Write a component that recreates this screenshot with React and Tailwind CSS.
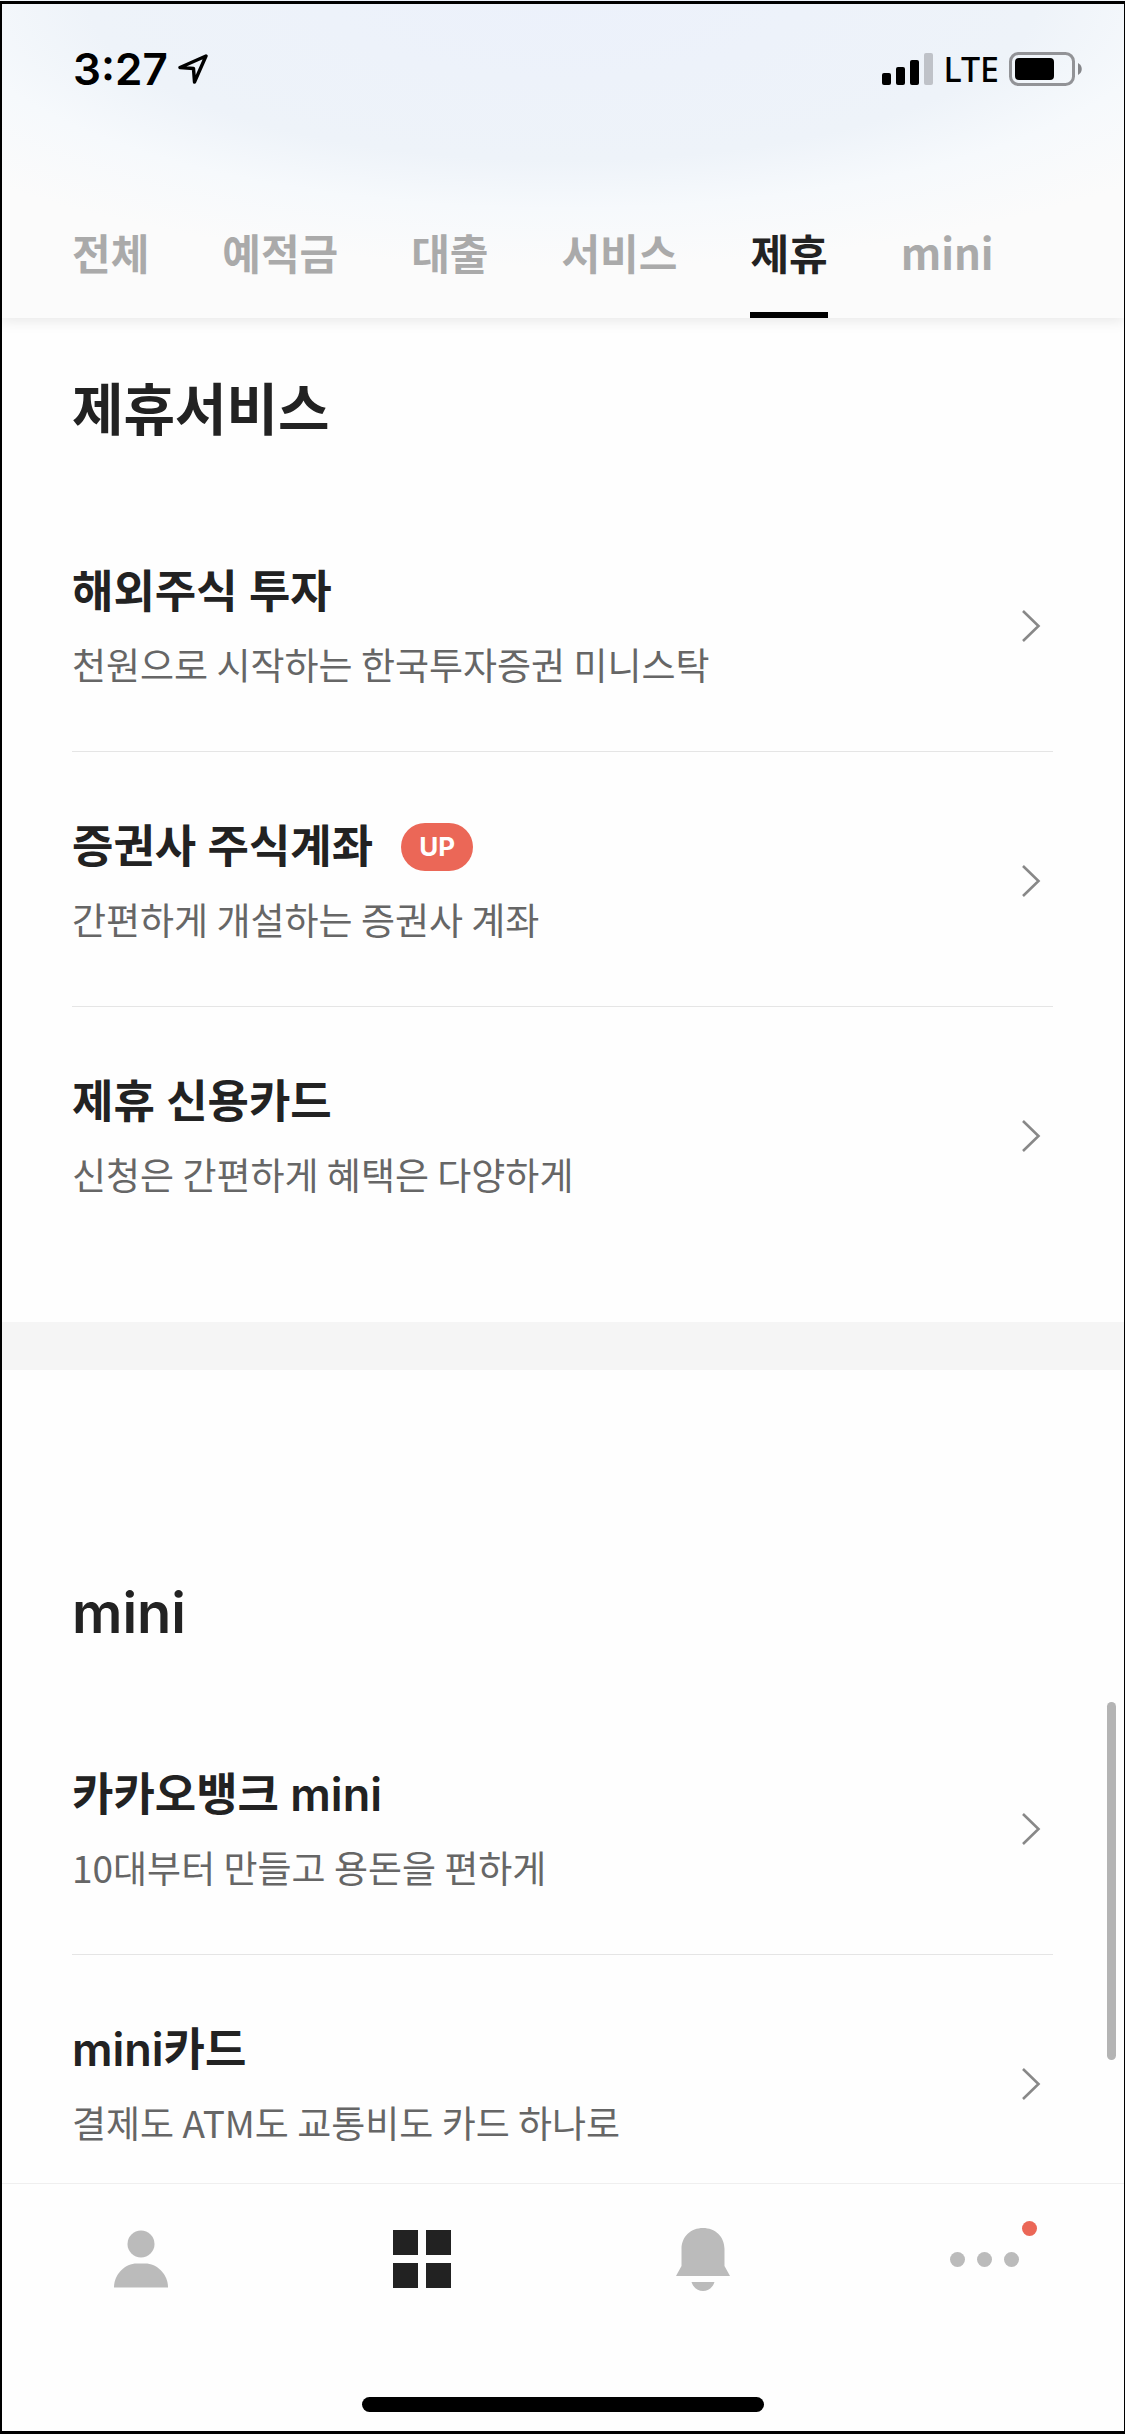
import React, { useState } from 'react';

const tabs = ['전체', '예적금', '대출', '서비스', '제휴', 'mini'];

const partnerServices = [
  { title: '해외주식 투자', desc: '천원으로 시작하는 한국투자증권 미니스탁' },
  { title: '증권사 주식계좌', desc: '간편하게 개설하는 증권사 계좌', badge: 'UP' },
  { title: '제휴 신용카드', desc: '신청은 간편하게 혜택은 다양하게' },
];

const miniServices = [
  { title: '카카오뱅크 mini', desc: '10대부터 만들고 용돈을 편하게' },
  { title: 'mini카드', desc: '결제도 ATM도 교통비도 카드 하나로' },
];

const StatusBar = () => (
  <div className="flex h-[138px] items-center justify-between pl-[73px] pr-[43px] text-black">
    <div className="flex items-center gap-[10px]">
      <span className="font-['Inter',sans-serif] text-[44px] leading-none font-semibold">3:27</span>
      <svg className="h-[30px] w-[30px]" viewBox="0 0 30 30" fill="none" stroke="currentColor" strokeWidth="3.4" strokeLinejoin="round">
        <path d="M28 2 L2 13.5 L15.5 14.5 L16.5 28 Z" />
      </svg>
    </div>
    <div className="flex items-center gap-[10px]">
      <svg className="h-[32px] w-[51px]" viewBox="0 0 51 32" fill="currentColor">
        <rect x="0" y="20" width="9" height="12" rx="2" />
        <rect x="14" y="14" width="9" height="18" rx="2" />
        <rect x="28" y="7" width="9" height="25" rx="2" />
        <rect x="42" y="0" width="9" height="32" rx="2" fill="#bfc2c8" />
      </svg>
      <span className="font-['Noto_Sans',sans-serif] text-[34px] leading-none font-medium">LTE</span>
      <svg className="h-[34px] w-[73px]" viewBox="0 0 73 34" fill="none">
        <rect x="1.5" y="1.5" width="63" height="31" rx="8" stroke="#929397" strokeWidth="3" />
        <rect x="6" y="6" width="39" height="22" rx="4" fill="#000" />
        <path d="M69 11 C74 13.5 74 20.5 69 23 Z" fill="#85868a" />
      </svg>
    </div>
  </div>
);

const ServiceRow = ({ title, desc, badge }) => (
  <li className="border-b border-[#e5e5e5] last:border-b-0">
    <a href="#" className="flex h-[254px] items-center justify-between pt-1 pr-3">
      <div className="pb-0.5">
        <div className="flex items-center gap-7">
          <h3 className="font-['Inter','Noto_Sans_CJK_KR',sans-serif] text-[45px] leading-[60px] font-semibold text-[#222]">
            {title}
          </h3>
          {badge && (
            <span className="flex h-12 items-center rounded-full bg-[#eb6757] px-[18px] font-['Inter',sans-serif] text-[26px] leading-none font-bold text-white">
              {badge}
            </span>
          )}
        </div>
        <p className="mt-[18px] text-[37px] leading-[48px] text-[#666]">{desc}</p>
      </div>
      <svg className="h-[34px] w-5" viewBox="0 0 20 34" fill="none" stroke="#888" strokeWidth="2.6">
        <path d="M2 2 L17.5 17 L2 32" />
      </svg>
    </a>
  </li>
);

const ServiceList = ({ heading, items }) => (
  <>
    <h2 className="mb-[51px] font-['Inter','Noto_Sans_CJK_KR',sans-serif] text-[56px] leading-[72px] font-semibold text-[#222]">
      {heading}
    </h2>
    <ul>
      {items.map((item) => (
        <ServiceRow key={item.title} {...item} />
      ))}
    </ul>
  </>
);

const BottomNav = () => (
  <nav className="relative h-[253px] shrink-0 border-t border-[#efefef] bg-[#fefefe]">
    <div className="grid grid-cols-4 pt-[37px]">
      <button type="button" aria-label="내 정보" className="flex h-[76px] items-center justify-center">
        <svg className="h-[64px] w-[54px]" viewBox="0 0 54 64" fill="#bbb">
          <circle cx="27" cy="17" r="13.5" />
          <path d="M0 60.5 C0 47 11 36.5 23 36.5 H31 C43 36.5 54 47 54 60.5 Z" />
        </svg>
      </button>
      <button type="button" aria-label="서비스" className="flex h-[76px] items-center justify-center">
        <svg className="h-[58px] w-[58px]" viewBox="0 0 58 58" fill="#222">
          <rect x="0" y="0" width="25" height="25" />
          <rect x="33" y="0" width="25" height="25" />
          <rect x="0" y="33" width="25" height="25" />
          <rect x="33" y="33" width="25" height="25" />
        </svg>
      </button>
      <button type="button" aria-label="알림" className="flex h-[76px] items-center justify-center">
        <svg className="h-[64px] w-[54px]" viewBox="0 0 54 64" fill="#bbb">
          <path d="M5.5 22 C5.5 9.5 15 1 27 1 C39 1 48.5 9.5 48.5 22 V39 L54 49 H0 L5.5 39 Z" />
          <path d="M15.5 55 H38.5 C36.5 61 32 64 27 64 C22 64 17.5 61 15.5 55 Z" />
        </svg>
      </button>
      <button type="button" aria-label="더보기" className="flex h-[76px] items-center justify-center">
        <span className="relative flex gap-3">
          <i className="size-[15px] rounded-full bg-[#bbb]" />
          <i className="size-[15px] rounded-full bg-[#bbb]" />
          <i className="size-[15px] rounded-full bg-[#bbb]" />
          <i className="absolute -top-[31px] -right-[18px] size-[15px] rounded-full bg-[#eb6757]" />
        </span>
      </button>
    </div>
    <div className="absolute bottom-6 left-1/2 h-[15px] w-[402px] -translate-x-1/2 rounded-full bg-black" />
  </nav>
);

const App = () => {
  const [activeTab, setActiveTab] = useState('제휴');

  return (
    <div className="relative flex h-screen flex-col overflow-hidden bg-[#fefefe] font-['Noto_Sans_CJK_KR',sans-serif]">
      <header className="relative z-10 shrink-0 bg-[#fbfbfb] bg-[radial-gradient(ellipse_70%_84%_at_50%_0%,#ecf1fb_0%,#eef3f9_60%,#f6f9fc_78%,#fbfbfb_100%)] shadow-[0_2px_14px_rgba(0,0,0,0.1)]">
        <StatusBar />
        <div className="flex h-[180px] items-end gap-[73px] px-[72px]">
          {tabs.map((tab) => (
            <button
              key={tab}
              type="button"
              onClick={() => setActiveTab(tab)}
              className={`border-b-6 pb-[30px] text-[42px] leading-[60px] font-bold ${
                activeTab === tab ? 'border-black text-[#222]' : 'border-transparent text-[#aaa]'
              }`}
            >
              {tab}
            </button>
          ))}
        </div>
      </header>

      <main className="relative min-h-0 flex-1 overflow-hidden">
        <section className="px-[72px] pt-14 pb-[61px]">
          <ServiceList heading="제휴서비스" items={partnerServices} />
        </section>
        <div className="h-12 bg-[#f5f5f5]" />
        <section className="px-[72px] pt-[207px]">
          <ServiceList heading="mini" items={miniServices} />
        </section>
        <div className="absolute right-[9px] bottom-[123px] h-[358px] w-[9px] rounded-full bg-[#b4b4b4]" />
      </main>

      <BottomNav />

      {/* device frame */}
      <div className="pointer-events-none absolute inset-x-0 top-px bottom-[2px] z-20 border-y-3 border-r border-l-2 border-black" />
    </div>
  );
};

export default App;
